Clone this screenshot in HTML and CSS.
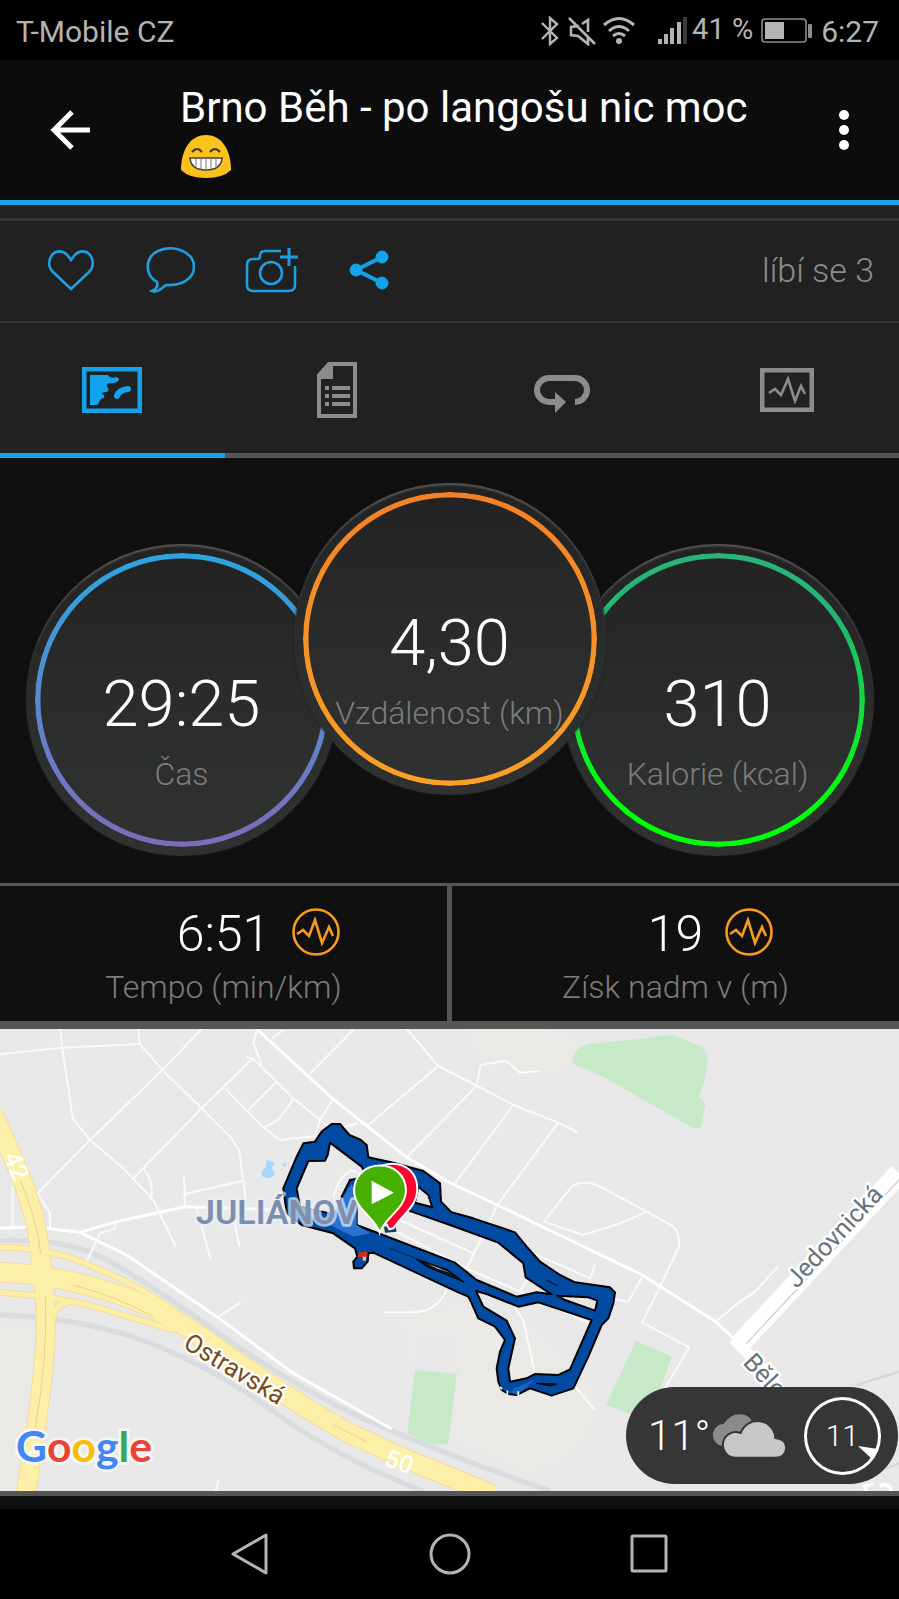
FILE: index.html
```html
<!DOCTYPE html>
<html lang="cs">
<head>
    <meta charset="UTF-8">
    <meta name="viewport" content="width=device-width, initial-scale=1.0">
    <title>Brno Běh</title>
    <link rel="stylesheet" href="styles.css">
</head>
<body>
    <div class="status-bar">
        <span class="carrier">T-Mobile CZ</span>
        <svg class="bluetooth" width="20" height="30" viewBox="0 0 20 30" fill="none" stroke="#b4b4b4" stroke-width="2.4">
            <path d="M2 7 L17 22 L10 28 V2 L17 8 L2 23"/>
        </svg>
        <svg class="muted" width="28" height="30" viewBox="0 0 28 30" fill="none" stroke="#b4b4b4" stroke-width="2.6">
            <path d="M1 2 L27 28 M11 10 L3 11 V19 L10 20 L20 28 V21 M14 8 L20 4 V16"/>
        </svg>
        <svg class="wifi" width="34" height="30" viewBox="0 0 34 30" fill="none" stroke="#b4b4b4" stroke-width="3">
            <path d="M2 9 Q17 -4 32 9 M7 15 Q17 6 27 15 M11 20 Q17 15 23 20"/>
            <circle cx="17" cy="25" r="3" fill="#b4b4b4" stroke="none"/>
        </svg>
        <svg class="signal" width="30" height="30" viewBox="0 0 30 30" fill="#b4b4b4">
            <rect x="0" y="23" width="4" height="5"/>
            <rect x="6" y="18" width="4" height="10"/>
            <rect x="12" y="12" width="4" height="16"/>
            <rect x="19" y="6" width="4" height="22"/>
            <rect x="25" y="1" width="4" height="27" fill="#3a3a3a"/>
        </svg>
        <span class="percent">41 %</span>
        <svg class="battery" width="52" height="26" viewBox="0 0 52 26">
            <rect x="1" y="1" width="44" height="23" rx="3" fill="none" stroke="#8c8c8c" stroke-width="1.6"/>
            <rect x="4" y="4" width="19" height="17" fill="#b4b4b4"/>
            <rect x="47" y="6" width="4" height="14" rx="1" fill="#8c8c8c"/>
        </svg>
        <span class="clock">6:27</span>
    </div>

    <header class="app-bar">
        <button class="back" aria-label="Zpět">
            <svg width="40" height="40" viewBox="0 0 40 40" fill="none" stroke="#fff" stroke-width="5">
                <path d="M40 20 H4 M22 2 L4 20 L22 38"/>
            </svg>
        </button>
        <h1>Brno Běh - po langošu nic moc
            <svg class="emoji" width="50" height="43" viewBox="0 0 50 43">
                <path d="M25 0 C42 0 50 17 50 35 Q42 43 25 43 Q8 43 0 35 C0 17 8 0 25 0Z" fill="#fcc21b"/>
                <path d="M11 17 Q16 11 21 17 M29 17 Q34 11 39 17" fill="none" stroke="#333" stroke-width="2"/>
                <path d="M9 23 H41 Q40 35 25 35 Q10 35 9 23Z" fill="#fff" stroke="#444" stroke-width="1.6"/>
                <path d="M15 24 V32 M20 24 V34 M25 24 V35 M30 24 V34 M35 24 V32" stroke="#777" stroke-width="1"/>
            </svg>
        </h1>
        <button class="more" aria-label="Další">
            <svg width="12" height="42" viewBox="0 0 12 42" fill="#fff">
                <circle cx="6" cy="6" r="5"/>
                <circle cx="6" cy="21" r="5"/>
                <circle cx="6" cy="36" r="5"/>
            </svg>
        </button>
    </header>

    <div class="social">
        <button aria-label="Líbí se">
            <svg width="48" height="46" viewBox="0 0 48 46" fill="none" stroke="#1f9fe0" stroke-width="2.6">
                <path d="M24 42 L6 25 C1 20 1 13 5 8 C9 3 17 3 21 9 L24 13 L27 9 C31 3 39 3 43 8 C47 13 47 20 42 25 Z"/>
            </svg>
        </button>
        <button aria-label="Komentář">
            <svg width="50" height="46" viewBox="0 0 50 46" fill="none" stroke="#1f9fe0" stroke-width="2.6">
                <path d="M12 35 C-1 28 0 10 13 4 C29 -3 49 5 49 20 C49 32 36 39 21 38 C16 42 12 46 7 44 C12 42 13 39 12 35Z"/>
            </svg>
        </button>
        <button aria-label="Přidat fotku">
            <svg width="54" height="46" viewBox="0 0 54 46" fill="none" stroke="#1f9fe0" stroke-width="2.6">
                <path d="M36 4 H20 Q15 4 15 9 Q15 12 12 12 H8 Q2 12 2 18 V38 Q2 44 8 44 H44 Q50 44 50 38 V19"/>
                <circle cx="26" cy="26" r="11"/>
                <path d="M35 10 H53 M44 1 V19" stroke-width="3"/>
            </svg>
        </button>
        <button aria-label="Sdílet">
            <svg width="40" height="42" viewBox="0 0 40 42" fill="#12a3ec" stroke="#12a3ec">
                <path d="M33 8 L7 21 L33 34" fill="none" stroke-width="4"/>
                <circle cx="33" cy="8" r="6"/>
                <circle cx="7" cy="21" r="6"/>
                <circle cx="33" cy="34" r="6"/>
            </svg>
        </button>
        <span class="likes">líbí se 3</span>
    </div>

    <nav class="tabs">
        <button class="tab active" aria-label="Mapa">
            <svg width="60" height="46" viewBox="0 0 60 46">
                <rect x="2" y="2" width="56" height="42" fill="none" stroke="#12a3ec" stroke-width="5"/>
                <path d="M8 8 H26 Q28 12 34 10 Q39 11 36 14 Q33 17 27 16 Q23 18 26 21 Q28 24 24 25 L19 26 Q23 28 22 31 Q18 31 17 36 L15 38 H8Z" fill="#12a3ec"/>
                <path d="M35 29 Q37 23 46 22" fill="none" stroke="#12a3ec" stroke-width="6" stroke-linecap="round"/>
            </svg>
        </button>
        <button class="tab" aria-label="Souhrn">
            <svg width="42" height="56" viewBox="0 0 42 56">
                <path d="M3 13 L13 2 H39 V54 H3Z" fill="none" stroke="#8c8c8c" stroke-width="4"/>
                <path d="M2 12 L12 1 H17 V17 H2Z" fill="#8c8c8c"/>
                <path d="M9 26 H13 M16 26 H34 M9 34 H13 M16 34 H34 M9 42 H13 M16 42 H34" stroke="#8c8c8c" stroke-width="4"/>
            </svg>
        </button>
        <button class="tab" aria-label="Kola">
            <svg class="lap" width="58" height="40" viewBox="0 0 58 40">
                <path d="M24 28 H16 A12 12 0 0 1 16 4 H42 A12 12 0 0 1 42 28" fill="none" stroke="#8c8c8c" stroke-width="6"/>
                <path d="M22 18 L33 28 L22 39Z" fill="#8c8c8c"/>
            </svg>
        </button>
        <button class="tab" aria-label="Grafy">
            <svg width="54" height="44" viewBox="0 0 54 44" fill="none" stroke="#8c8c8c">
                <rect x="2" y="2" width="50" height="40" stroke-width="5"/>
                <path d="M9 25 L15 21 L21 27 L28 11 L35 33 L41 18 L45 26" stroke-width="2.6"/>
            </svg>
        </button>
    </nav>

    <section class="dials">
        <div class="dial time">
            <span class="value">29:25</span>
            <span class="label">Čas</span>
        </div>
        <div class="dial distance">
            <span class="value">4,30</span>
            <span class="label">Vzdálenost (km)</span>
        </div>
        <div class="dial calories">
            <span class="value">310</span>
            <span class="label">Kalorie (kcal)</span>
        </div>
    </section>

    <section class="stats">
        <div class="stat">
            <span class="number">6:51</span>
            <svg class="chart-icon" width="48" height="48" viewBox="0 0 48 48" fill="none" stroke="#f89b1c" stroke-width="2.6">
                <circle cx="24" cy="24" r="22.5"/>
                <path d="M5 26 L11 22 L17 28 L23 12 L30 35 L37 19 L41 28"/>
            </svg>
            <span class="caption">Tempo (min/km)</span>
        </div>
        <div class="stat">
            <span class="number">19</span>
            <svg class="chart-icon" width="48" height="48" viewBox="0 0 48 48" fill="none" stroke="#f89b1c" stroke-width="2.6">
                <circle cx="24" cy="24" r="22.5"/>
                <path d="M5 26 L11 22 L17 28 L23 12 L30 35 L37 19 L41 28"/>
            </svg>
            <span class="caption">Získ nadm v (m)</span>
        </div>
    </section>

    <section class="map">
        <svg class="map-canvas" viewBox="0 27 2697 1386">
            <!-- land -->
            <path class="sand" d="M1395 27 L1440 100 L1500 130 L1680 150 L1760 75 L1650 27Z"/>
            <path class="sand" d="M0 920 H105 L90 1150 L50 1413 H0Z"/>
            <path class="sand" d="M1210 900 L1380 860 L1560 900 L1790 1130 Q1770 1300 1590 1350 L1350 1250 L1380 1060 V940 H1260 L1240 1060Z"/>
            <path class="park" d="M1718 115 Q1725 80 1770 72 L1940 55 Q2010 40 2030 50 L2105 80 Q2120 90 2122 110 Q2122 170 2095 235 Q2115 240 2117 260 Q2105 290 2108 305 Q2105 330 2080 325 L1800 165 L1730 138 Q1715 130 1718 115Z"/>
            <path class="park" d="M1245 1050 L1370 1062 L1345 1272 L1285 1270 L1222 1240Z"/>
            <path class="park" d="M1908 963 L2015 1010 L1945 1200 L1818 1155Z"/>
            <path class="pond" d="M800 418 L825 430 L815 445 L825 460 Q820 475 800 474 Q780 470 785 452 L798 442Z M845 432 L858 430 L858 442Z"/>

            <!-- railway -->
            <g class="rail">
                <path d="M0 662 Q150 655 270 695 Q400 755 700 970 Q900 1110 1100 1200 Q1350 1310 1650 1413"/>
                <path d="M0 885 Q200 890 400 950 Q620 1030 800 1160 Q1000 1310 1270 1413"/>
            </g>

            <!-- streets -->
            <g class="street">
                <path d="M180 27 L187 85 L218 295 L270 360 L370 445 L460 540 L528 682"/>
                <path d="M0 103 L187 83 L420 72 L415 27"/>
                <path d="M420 72 L487 150 L605 265 L690 350 L717 390 L738 540"/>
                <path d="M605 27 L487 150 L270 360 L112 520 L150 580 V630"/>
                <path d="M740 112 L758 115 L605 265 L397 478 M430 445 Q465 490 452 540"/>
                <path d="M758 115 L830 185 L880 235 L960 300 L1000 330 L1075 310"/>
                <path d="M770 30 L760 70 L785 135 M830 185 L745 270 M675 205 L790 322 L840 360 L945 348 L960 300 L998 240 M880 235 Q840 310 790 322"/>
                <path d="M815 55 L850 30 M930 160 L1060 30"/>
                <path d="M1105 315 L1315 138 L1220 27 M1315 138 L1430 197 L1540 255 L1675 308 L1735 338"/>
                <path d="M1220 412 L1430 197 L1442 135 L1517 122 L1560 158 L1620 153"/>
                <path d="M1540 255 L1365 490 M1675 308 L1492 555 L1400 745"/>
                <path d="M552 465 L555 555 M555 522 L730 482 M590 565 L632 718 M700 590 L718 680 M38 500 V620"/>
                <path d="M350 605 L345 625 L300 640 L255 735 M650 893 L722 848"/>
                <path d="M1153 877 H1240 Q1310 875 1340 810"/>
                <path d="M1632 605 L1715 500 Q1750 475 1800 500 L1940 575 L2020 620 Q2040 640 2037 680 L1980 800 L1927 908 L2068 982 L1980 1130"/>
                <path d="M1632 605 L1750 645 L1860 610 L1940 575 M1927 770 L1885 845 L1800 830 M1785 735 L1770 775 L1600 700"/>
                <path d="M1000 530 Q1030 440 1070 455 M1200 600 L1420 700 M1180 630 L1400 745 L1560 815 L1780 915 M1580 780 L1560 815"/>
                <path d="M1545 865 L1570 900 L1607 1070 M1725 1100 L1785 1170 M2147 905 L2220 845 L2265 815 L2335 738 M648 1413 L655 1380"/>
            </g>
            <g class="avenue">
                <path d="M770 27 L1000 238 L1220 412 L1347 487 L1492 555 L1927 765 L1982 800 L2147 905 L2217 970"/>
                <path d="M0 625 L100 620 L240 637 L350 605 L555 560 L860 570 M240 637 L380 705 L650 890 L880 1060 L1175 1227"/>
            </g>
            <path d="M2570 1095 L2697 1055 M2660 1345 L2697 1330" stroke="#d6d6d6" stroke-width="7"/>
            <path d="M2217 975 L2697 460" stroke="#fff" stroke-width="62"/>
            <path d="M2235 975 L2697 480" stroke="#cfcfcf" stroke-width="4"/>
            <path d="M2200 955 L2330 1090" stroke="#fff" stroke-width="34"/>
            <path d="M2600 1413 L2592 1398 L2620 1392 M2640 1398 Q2665 1385 2675 1413" fill="none" stroke="#fff" stroke-width="11"/>

            <!-- highways, casing first -->
            <g class="casing">
                <path d="M0 682 Q160 680 300 750 Q430 800 560 900 M0 818 Q200 830 350 880 L520 930 M160 895 Q165 850 210 848" stroke-width="20"/>
                <path d="M0 757 Q160 760 350 822 Q500 870 660 990 Q900 1160 1050 1240 L1200 1310 Q1350 1370 1480 1425" stroke-width="62"/>
                <path d="M-20 280 L50 440 Q110 580 120 700 Q140 830 137 950 Q130 1100 78 1420" stroke-width="60"/>
            </g>
            <g class="highway">
                <path d="M0 682 Q160 680 300 750 Q430 800 560 900 M0 818 Q200 830 350 880 L520 930 M160 895 Q165 850 210 848" stroke-width="14"/>
                <path d="M0 757 Q160 760 350 822 Q500 870 660 990 Q900 1160 1050 1240 L1200 1310 Q1350 1370 1480 1425" stroke-width="56"/>
                <path d="M-20 280 L50 440 Q110 580 120 700 Q140 830 137 950 Q130 1100 78 1420" stroke-width="54"/>
            </g>
            <path d="M60 480 Q112 600 122 700 M136 830 Q145 1000 105 1230 M220 795 Q350 830 460 890 M1000 1215 L1100 1265" fill="none" stroke="#ecd088" stroke-width="3"/>

            <g class="shield">
                <text transform="translate(10 408) rotate(68)">42</text>
                <text transform="translate(82 1290) rotate(95)">3</text>
                <text transform="translate(1150 1335) rotate(20)">50</text>
            </g>

            <!-- recorded route -->
            <g transform="translate(780 240)">
                <path class="route" d="M70 265 L110 170 L130 130 L165 125 L185 95 L215 72 H240 L268 105 L300 118 L320 135 L325 172 L400 188 L490 213 L540 250 L543 305 L575 337 L640 355 L765 397 L800 440 L840 485 L900 525 L945 547 L1050 562 L1065 577 L1060 610 L1045 655 L1025 675 L985 770 L940 865 L875 887 L810 865 L770 885 L745 882 L725 870 L715 845 L710 805 L720 755 L735 720 L705 680 L655 655 L635 610 L625 590 L590 575 L430 500 L340 458 L325 460 L323 485 L305 505 H282 L280 485 L292 470 L285 445 L220 400 L125 375 L80 340Z
                    M145 183 L195 182 L203 165 L210 128 L305 200 L320 230 L270 240 L245 290 L230 345 L120 320 L110 265Z
                    M475 260 L505 285 L517 322 L465 308Z
                    M455 335 L570 375 L715 428 L790 490 L797 532 L875 583 L830 577 L770 590 L650 540 L585 488 L330 390 L290 375 L290 280Z
                    M890 587 L985 592 L1012 602 L1005 632 L915 600Z
                    M648 573 L680 582 L775 620 L835 607 L995 660 L930 808 L895 825 L825 822 L800 835 L750 845 L745 805 L765 715 L740 662 L670 620Z"/>
                <path d="M470 478 L560 508 L612 546 L500 500Z M860 540 L892 558 M830 850 L890 852 L870 858Z" fill="#0b1420" stroke="#000" stroke-width="3"/>
                <path d="M390 445 L480 480" stroke="#06254d" stroke-width="3"/>
                <path d="M500 490 L575 520 L530 505Z" fill="#d8d8d8"/>
                <path d="M245 300 L275 250 L290 290 L290 375 L330 400 L280 410 L200 370Z" fill="#2a72cf"/>
                <path d="M722 860 L750 880 L760 866 L825 838 L800 862 L770 885Z" fill="#1b63bd"/>
                <path d="M742 888 V872 M775 888 V874 M720 860 L726 868" stroke="#fff" stroke-width="5"/>
                <path d="M297 457 L322 455 V470 L292 472Z" fill="#d9261c"/>
                <path d="M308 470 H318 V482 H308Z" fill="#f6c27a"/>
            </g>
            <text class="district" x="588" y="612">JULIÁNOV</text>

            <!-- start and finish pins -->
            <g transform="translate(780 240)">
                <path d="M372 380 L405 375 L410 395 L375 398Z" fill="#15395f"/>
                <path d="M388 388 L360 340 Q315 290 320 260 C325 170 470 165 472 265 C472 320 430 340 400 385Z" fill="#ff0031" stroke="#fff" stroke-width="6"/>
                <path d="M359 398 C345 350 283 330 282 270 C286 172 434 172 438 270 C436 330 375 350 359 398Z" fill="#46b000" stroke="#fff" stroke-width="6"/>
                <path d="M335 242 L402 278 L335 313Z" fill="#fff"/>
            </g>

            <text class="road-name brown" transform="translate(546 982) rotate(31)">Ostravská</text>
            <text class="road-name" transform="translate(2390 808) rotate(-47)">Jedovnická</text>
            <text class="road-name" transform="translate(2226 1030) rotate(47)">Bělo</text>
            <text class="google" x="48" y="1325"><tspan fill="#4285f4">G</tspan><tspan fill="#ea4335">o</tspan><tspan fill="#fbbc05">o</tspan><tspan fill="#4285f4">g</tspan><tspan fill="#34a853">l</tspan><tspan fill="#ea4335">e</tspan></text>
        </svg>

        <div class="weather">
            <span class="temperature">11°</span>
            <svg class="clouds" width="78" height="44" viewBox="0 0 78 44">
                <path d="M14 32 A11 11 0 1 1 14 10 Q20 0 30 0 Q38 0 42 6 L30 22Z" fill="#8b8b8b"/>
                <path d="M26 44 A13 13 0 1 1 31 19 A18 18 0 0 1 66 24 Q77 25 77 34 Q76 44 66 44Z" fill="#c7c7c7" stroke="#363636" stroke-width="2"/>
            </svg>
            <div class="compass">
                <span>11</span>
                <svg class="pointer" width="20" height="14" viewBox="0 0 20 14">
                    <path d="M0 0 L20 3 L14 13Z" fill="#fff"/>
                </svg>
            </div>
        </div>
    </section>

    <nav class="system-nav">
        <button aria-label="Zpět">
            <svg width="42" height="44" viewBox="0 0 42 44" fill="none" stroke="#b4b4b4" stroke-width="3" stroke-linejoin="round">
                <path d="M37 3 V41 L4 22Z"/>
            </svg>
        </button>
        <button aria-label="Domů">
            <svg width="42" height="44" viewBox="0 0 42 44" fill="none" stroke="#b4b4b4" stroke-width="3">
                <circle cx="21" cy="22" r="19"/>
            </svg>
        </button>
        <button aria-label="Přehled">
            <svg width="42" height="44" viewBox="0 0 42 44" fill="none" stroke="#b4b4b4" stroke-width="3">
                <rect x="3" y="4" width="34" height="35" rx="1"/>
            </svg>
        </button>
    </nav>
</body>
</html>
```
FILE: styles.css
```css
* {
    box-sizing: border-box;
}

body {
    margin: 0;
    background: #101010;
    color: #fff;
    font-family: Roboto, "Noto Sans", sans-serif;
}

button {
    padding: 0;
    border: none;
    background: none;
    cursor: pointer;
}

svg {
    display: block;
}

/* status bar */
.status-bar {
    display: flex;
    align-items: center;
    height: 60px;
    padding: 2px 20px 0 16px;
    background: #000;
    color: #b4b4b4;
    font-size: 30px;
}

.carrier {
    margin-right: auto;
}

.muted {
    margin-left: 8px;
}

.wifi {
    margin-left: 6px;
}

.signal {
    margin-left: 22px;
}

.percent {
    margin-left: 4px;
    padding-bottom: 4px;
    font-size: 29px;
}

.battery {
    margin: 0 8px;
}

/* title */
.app-bar {
    display: flex;
    align-items: center;
    height: 145px;
    padding: 0 49px 0 50px;
    border-bottom: 5px solid #1ba4e6;
    background: #0c0c0c;
}

h1 {
    flex: 1;
    margin: 0;
    padding: 4px 50px 0 90px;
    font-size: 42px;
    line-height: 49px;
    font-weight: 400;
}

.emoji {
    margin: 3px 0 3px 1px;
}

/* like, comment, photo, share */
.social {
    display: flex;
    align-items: center;
    gap: 50px;
    height: 118px;
    padding: 14px 25px 0 47px;
    border-bottom: 2px solid #363636;
    background: linear-gradient(#212121 13px, #363636 13px, #363636 16px, #212121 16px);
}

.likes {
    margin-left: auto;
    color: #8c8c8c;
    font-size: 34px;
    font-weight: 300;
}

.tabs {
    display: grid;
    grid-template-columns: repeat(4, 1fr);
    background: #212121;
}

.tab {
    display: flex;
    align-items: center;
    justify-content: center;
    height: 135px;
    padding-top: 4px;
    border-bottom: 5px solid #555;
}

.tab.active {
    border-bottom-color: #12a3ec;
}

.lap {
    margin-top: 8px;
}

/* round gauges */
.dials {
    display: flex;
    justify-content: center;
    height: 425px;
    padding: 25px 0;
}

.dial {
    display: flex;
    flex-direction: column;
    align-items: center;
    position: relative;
    width: 312px;
    height: 312px;
    margin: 61px -22px 0;
    padding-top: 120px;
    border-radius: 50%;
    background: linear-gradient(#222, #2c2e2d 60%, #303231);
    box-shadow: inset 0 3px 2px -1px #585858, 0 0 3px #1c1c1c;
}

/* coloured ring inside the bezel */
.dial::before {
    content: "";
    position: absolute;
    inset: 9px;
    border-radius: 50%;
    background: var(--ring);
    mask: radial-gradient(closest-side, transparent calc(100% - 6px), #000 calc(100% - 5px));
}

.time {
    --ring: linear-gradient(#2aa5e0, #5b87cf 50%, #7e6bb8);
}

.distance {
    z-index: 1;
    margin-top: 0;
    --ring: linear-gradient(#f58025, #f79226 50%, #f9a025);
}

.calories {
    --ring: linear-gradient(#2bb37a, #21b86e 25%, #12dd3a 55%, #00ff08 85%);
}

.value {
    font-size: 65px;
    line-height: 80px;
    font-weight: 300;
}

.label {
    color: #7c7c7c;
    font-size: 32px;
    line-height: 60px;
    font-weight: 300;
    white-space: nowrap;
}

/* pace and elevation */
.stats {
    display: grid;
    grid-template-columns: 1fr 1fr;
    gap: 5px;
    padding: 3px 0 8px;
    background: #555;
}

.stat {
    display: grid;
    grid-template-columns: 1fr auto 1fr;
    align-items: center;
    height: 135px;
    padding: 16px 0 12px;
    background: #101010;
}

.number {
    grid-column: 2;
    font-size: 50px;
    line-height: 60px;
    font-weight: 300;
}

.chart-icon {
    margin: 0 0 4px 22px;
}

.caption {
    grid-column: 1 / -1;
    color: #7c7c7c;
    font-size: 32px;
    line-height: 40px;
    font-weight: 300;
    text-align: center;
}

/* map */
.map {
    position: relative;
    border-bottom: 5px solid #555;
}

.map-canvas {
    width: 100%;
    background: #e8e8e8;
}

.sand {
    fill: #ebe9e5;
}

.park {
    fill: #c6e9c7;
}

.pond {
    fill: #a9d5fb;
}

.rail path {
    fill: none;
    stroke: #dadde0;
    stroke-width: 16;
}

.street path {
    fill: none;
    stroke: #fafafa;
    stroke-width: 6;
}

.avenue path {
    fill: none;
    stroke: #fff;
    stroke-width: 9;
}

.casing path {
    fill: none;
    stroke: #f0dca0;
}

.highway path {
    fill: none;
    stroke: #feefa8;
}

.shield text {
    fill: #fff;
    font-size: 74px;
    font-weight: 500;
}

.route {
    fill: #004aa1;
    fill-rule: evenodd;
    stroke: #000;
    stroke-width: 6;
    stroke-linejoin: round;
}

.district {
    fill: #7d8fab;
    stroke: rgba(232, 240, 250, 0.7);
    stroke-width: 16;
    stroke-linejoin: round;
    paint-order: stroke;
    font-size: 102px;
    font-weight: 600;
}

.road-name {
    fill: #68737d;
    stroke: #fff;
    stroke-width: 14;
    stroke-linejoin: round;
    paint-order: stroke;
    font-size: 76px;
}

.brown {
    fill: #7a4912;
}

.google {
    stroke: #f6f6f6;
    stroke-width: 16;
    stroke-linejoin: round;
    paint-order: stroke;
    font-family: Lato, sans-serif;
    font-size: 128px;
    font-weight: 700;
}

.weather {
    display: flex;
    align-items: center;
    position: absolute;
    right: 1px;
    bottom: 7px;
    width: 272px;
    height: 97px;
    padding: 0 17px 0 22px;
    border-radius: 49px;
    background: #363636;
    font-weight: 300;
}

.temperature {
    font-size: 42px;
}

.clouds {
    margin-left: auto;
}

.compass {
    display: flex;
    align-items: center;
    justify-content: center;
    position: relative;
    width: 78px;
    height: 78px;
    margin-left: 16px;
    border: 3px solid #fff;
    border-radius: 50%;
    font-size: 30px;
}

.pointer {
    position: absolute;
    right: 0;
    bottom: 12px;
}

.system-nav {
    display: flex;
    align-items: center;
    justify-content: center;
    gap: 158px;
    height: 90px;
    margin-top: 13px;
    background: #000;
}
```
